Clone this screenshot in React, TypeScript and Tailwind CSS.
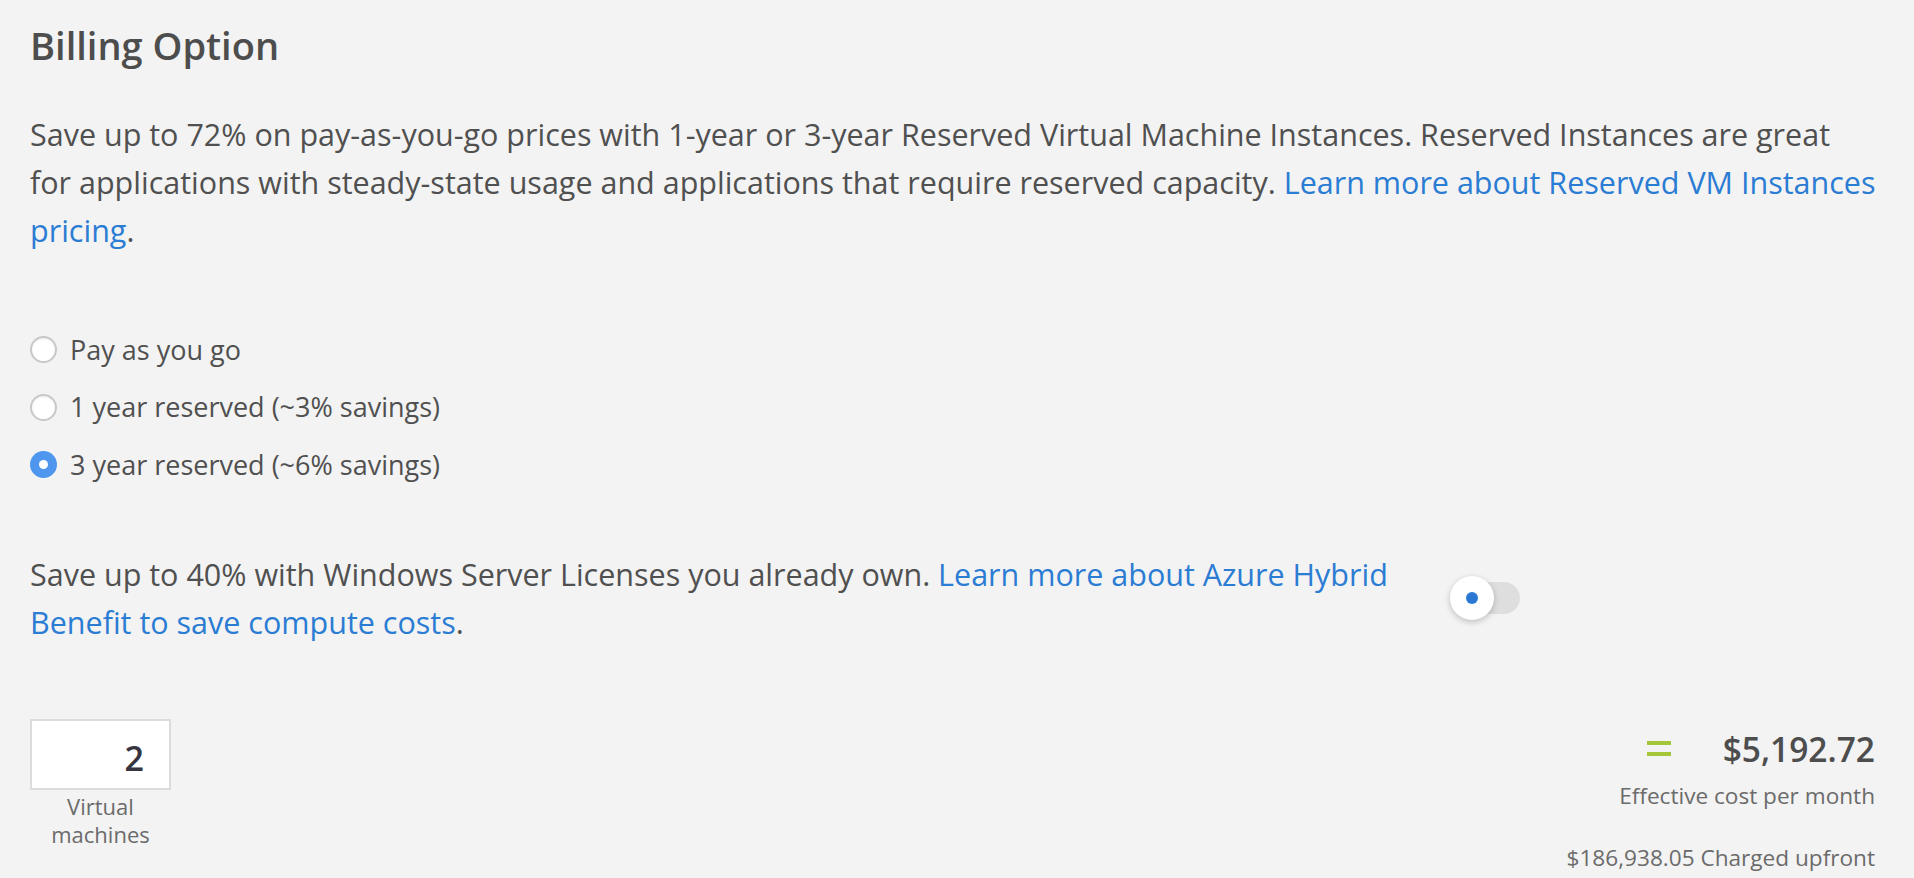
import { useState } from "react";

const options = [
  { id: "payg", label: "Pay as you go" },
  { id: "1yr", label: "1 year reserved (~3% savings)" },
  { id: "3yr", label: "3 year reserved (~6% savings)" },
];

function Radio({ checked }: { checked: boolean }) {
  if (checked) {
    return (
      <span className="flex h-[27px] w-[27px] items-center justify-center rounded-full bg-[#4f97ee]">
        <span className="h-[9px] w-[9px] rounded-full bg-white" />
      </span>
    );
  }
  return (
    <span className="h-[27px] w-[27px] rounded-full border-2 border-[#c8c8c8] bg-white shadow-[inset_0_1px_2px_rgba(0,0,0,0.08)]" />
  );
}

export default function App() {
  const [billing, setBilling] = useState("3yr");
  const [hybrid, setHybrid] = useState(false);

  return (
    <div className="min-h-screen bg-[#f3f3f3] pl-[30px] pr-[39px] pt-[21px] text-[#505050] [font-family:'Open_Sans',sans-serif]">
      <h2 className="text-[38px] font-semibold leading-[48px] text-[#4d4d4d]">Billing Option</h2>

      <p className="mr-[-16px] mt-[41px] text-[30.5px] leading-[48px]">
        Save up to 72% on pay-as-you-go prices with 1-year or 3-year Reserved Virtual Machine Instances. Reserved
        Instances are great
        <br />
        for applications with steady-state usage and applications that require reserved capacity.{" "}
        <a href="#" className="text-[#2b7cd3]">
          Learn more about Reserved VM Instances pricing
        </a>
        .
      </p>

      <div className="mt-[67px] flex flex-col">
        {options.map((o) => (
          <label
            key={o.id}
            onClick={() => setBilling(o.id)}
            className="flex h-[57.5px] cursor-pointer items-center gap-[13px] text-[27px]"
          >
            <Radio checked={billing === o.id} />
            <span>{o.label}</span>
          </label>
        ))}
      </div>

      <div className="mt-[56px] flex items-center">
        <p className="w-[1380px] text-[30.5px] leading-[48px]">
          Save up to 40% with Windows Server Licenses you already own.{" "}
          <a href="#" className="text-[#2b7cd3]">
            Learn more about Azure Hybrid Benefit to save compute costs
          </a>
          .
        </p>
        <button
          onClick={() => setHybrid(!hybrid)}
          className="relative ml-[40px] h-[44px] w-[72px] shrink-0"
          aria-pressed={hybrid}
        >
          <span className="absolute left-[12px] top-[6px] h-[32px] w-[58px] rounded-full bg-[#dedede]" />
          <span className="absolute left-0 top-0 flex h-[44px] w-[44px] items-center justify-center rounded-full bg-white shadow-[0_2px_6px_rgba(0,0,0,0.22)]">
            <span className="h-[12px] w-[12px] rounded-full bg-[#2b78d4]" />
          </span>
        </button>
      </div>

      <div className="mt-[73px] flex items-start justify-between">
        <div className="flex w-[141px] flex-col items-center">
          <div className="flex h-[71px] w-[141px] items-center justify-end border-2 border-[#dcdcdc] bg-white pr-[25px] pt-[8px] text-[34px] font-semibold text-[#35343f]">
            2
          </div>
          <div className="mt-[2px] text-center text-[22px] leading-[28px] text-[#6b6b6b]">
            Virtual
            <br />
            machines
          </div>
        </div>

        <div className="flex flex-col items-end">
          <div className="mt-[8px] flex items-center">
            <span className="mr-[52px] flex flex-col gap-[7px]">
              <span className="h-[4px] w-[24px] bg-[#a4c639]" />
              <span className="h-[4px] w-[24px] bg-[#a4c639]" />
            </span>
            <span className="text-[33.5px] font-semibold leading-[44px] text-[#4d4d4d]">$5,192.72</span>
          </div>
          <div className="mt-[9px] text-[22.6px] leading-[32px] text-[#6b6b6b]">Effective cost per month</div>
          <div className="mt-[30px] text-[22.6px] leading-[32px] text-[#6b6b6b]">$186,938.05 Charged upfront</div>
        </div>
      </div>
    </div>
  );
}
